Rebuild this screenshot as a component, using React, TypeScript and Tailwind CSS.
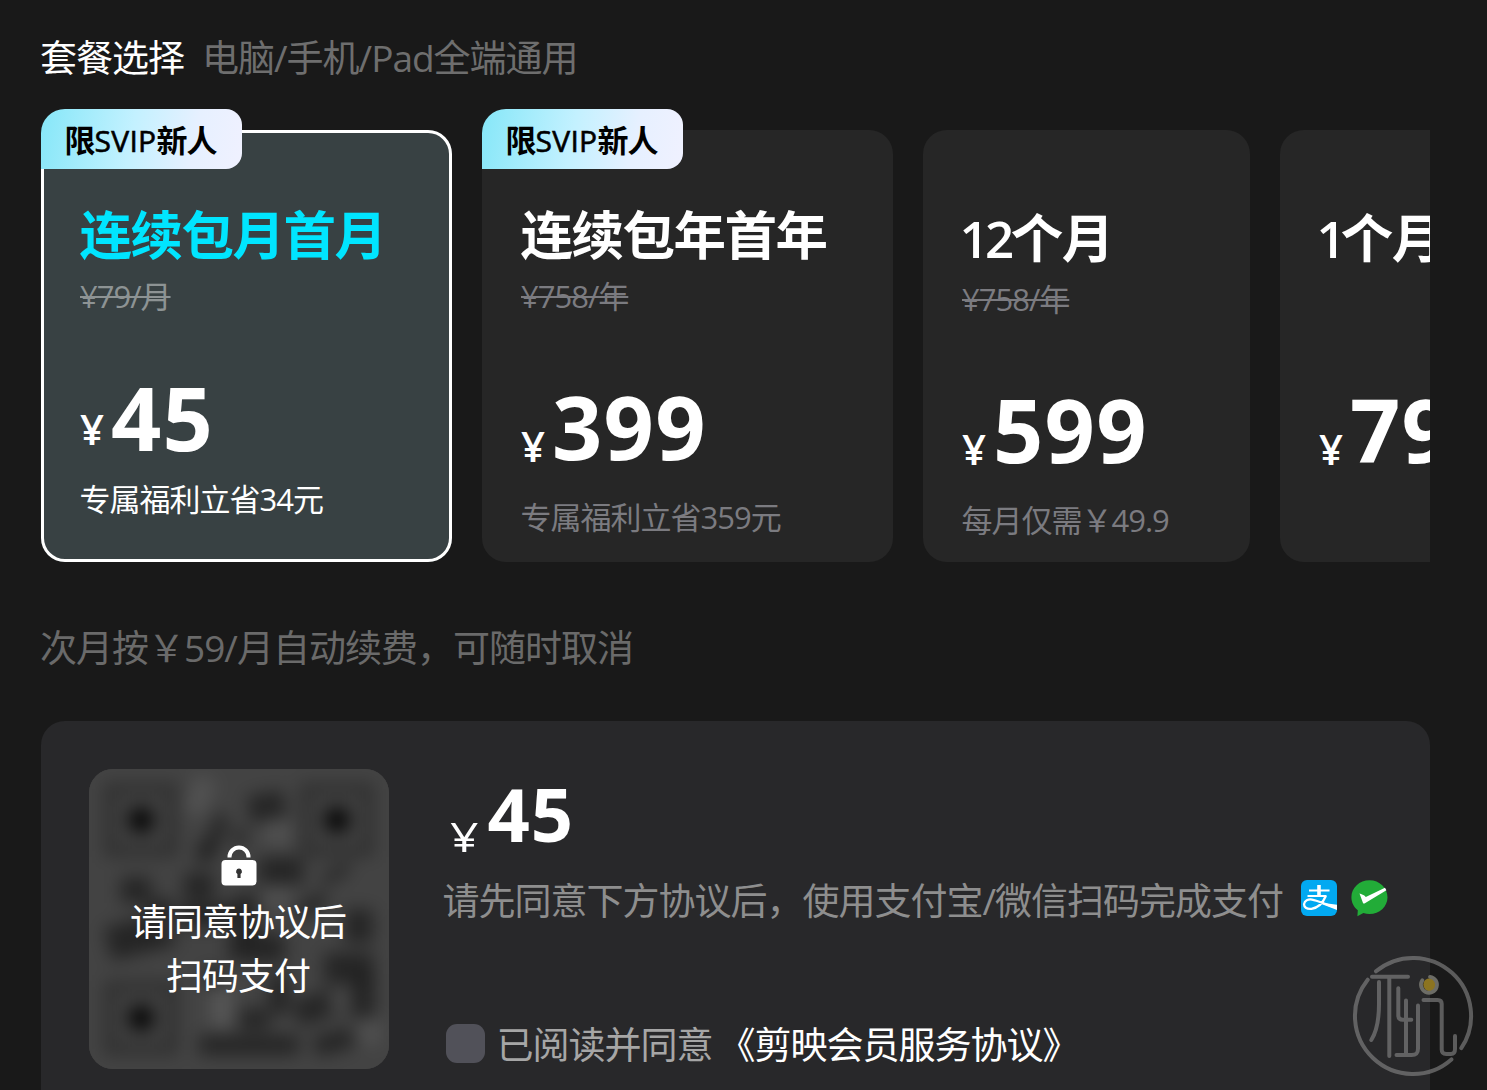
import type { ReactNode } from "react";

const L = ({ children, className = "" }: { children: ReactNode; className?: string }) => (
  <span className={className}>{children}</span>
);

type PlanProps = {
  badge?: boolean;
  selected?: boolean;
  width: string;
  title: ReactNode;
  titleBox: string;
  original?: ReactNode;
  price: string;
  priceBox: string;
  yenBox: string;
  note?: ReactNode;
  noteBox: string;
};

function Plan({ badge, selected, width, title, titleBox, original, price, priceBox, yenBox, note, noteBox }: PlanProps) {
  return (
    <div
      className={`relative flex h-[432px] shrink-0 flex-col rounded-[24px] ${width} ${
        selected ? "bg-[#384143] ring-[3px] ring-inset ring-white" : "bg-[#262626]"
      }`}
    >
      {badge && (
        <div className="absolute left-0 top-[-21px] h-[60px] w-[201px] whitespace-nowrap rounded-[16px] rounded-bl-none rounded-tl-[24px] bg-[linear-gradient(100deg,#86e7f8_0%,#c3f1ff_45%,#e6f0ff_75%,#f0f1ff_100%)] pl-[23.5px] pt-[1px] text-[31px] font-bold leading-[60px] tracking-[-1px] text-black">
          限<L className="text-[30px] font-medium tracking-[0.300px] [-webkit-text-stroke:0.600px_black]">SVIP</L>新人
        </div>
      )}
      <div className={`h-[60px] whitespace-nowrap pl-[38.5px] text-[52.5px] font-bold leading-[60px] tracking-[-1.5px] ${titleBox} ${selected ? "text-[#00e5ff]" : "text-white"}`}>
        {title}
      </div>
      <div className={`mt-[1px] h-[60px] whitespace-nowrap pl-[39px] text-[31px] leading-[60px] tracking-[-1px] ${selected ? "text-[#8d9394]" : "text-[#7b7b80]"}`}>
        {original && <span className="line-through decoration-2">{original}</span>}
      </div>
      <div className={`flex h-[100px] whitespace-nowrap pl-[39px] text-white ${priceBox}`}>
        <span className={`w-[31px] text-[42px] font-semibold leading-[100px] ${yenBox}`}>¥</span>
        <span className="text-[88px] font-bold leading-[100px] tracking-[1.3px]">{price}</span>
      </div>
      <div className={`h-[40px] whitespace-nowrap pl-[38.5px] text-[31px] leading-[40px] tracking-[-1px] ${noteBox} ${selected ? "text-white" : "text-[#7b7b80]"}`}>
        {note}
      </div>
    </div>
  );
}

function LockIcon() {
  return (
    <svg width="36" height="41" viewBox="0 0 36 41" fill="none">
      <path d="M8.500 12.500V12a9.500 9.500 0 0 1 19 0v.5" stroke="#fff" strokeWidth="4" />
      <rect x="0.500" y="15" width="35" height="25.500" rx="4" fill="#fff" />
      <path d="M18 23.500a3 3 0 0 0-1.600 5.500v4h3.200v-4a3 3 0 0 0-1.600-5.500Z" fill="#333" />
    </svg>
  );
}

const blobs: [number, number, number, number, number][] = [
  [120, 45, 14, 40, 20], [108, 72, 16, 22, 10], [160, 24, 36, 28, -10], [145, 60, 12, 16, 0],
  [170, 88, 44, 28, 0], [95, 104, 30, 26, 0], [32, 108, 30, 26, 0], [18, 152, 50, 34, -15],
  [58, 130, 26, 24, 0], [92, 134, 56, 24, 0], [140, 165, 56, 28, 0], [146, 125, 22, 50, 0],
  [205, 130, 34, 14, -35], [256, 140, 28, 34, 0], [235, 184, 50, 30, 0], [60, 160, 26, 18, 0],
  [180, 205, 20, 40, 0], [206, 225, 44, 26, -20], [262, 205, 24, 44, 0], [150, 240, 30, 20, 0],
  [110, 266, 100, 20, 0], [225, 263, 40, 20, -15], [232, 100, 30, 10, -30], [115, 200, 20, 16, 0],
];

function BlurredCode() {
  return (
    <svg className="absolute inset-0" width="300" height="300" viewBox="0 0 300 300">
      <defs>
        <filter id="soft" x="-20%" y="-20%" width="140%" height="140%" colorInterpolationFilters="sRGB">
          <feGaussianBlur stdDeviation="8.500" />
        </filter>
      </defs>
      <rect width="300" height="300" fill="#434343" />
      <g filter="url(#soft)">
        <rect x="-20" y="-20" width="340" height="340" fill="#434343" />
        {[[52, 51], [248, 51], [52, 249]].map(([x, y]) => (
          <g key={`${x}-${y}`}>
            <rect x={x - 31} y={y - 31} width="62" height="62" fill="none" stroke="#303030" strokeWidth="12" />
            <rect x={x - 12} y={y - 12} width="24" height="24" fill="#080808" />
          </g>
        ))}
        {blobs.map(([x, y, w, h, r], i) => (
          <rect key={i} x={x} y={y} width={w} height={h} fill="#1e1e1e" opacity="0.8" transform={`rotate(${r} ${x + w / 2} ${y + h / 2})`} />
        ))}
        <rect x="100" y="8" width="22" height="38" fill="#525252" transform="rotate(20 111 27)" />
        <rect x="176" y="50" width="26" height="26" fill="#505050" />
        <rect x="176" y="116" width="26" height="22" fill="#505050" />
        <rect x="122" y="218" width="22" height="40" fill="#565656" />
        <rect x="240" y="226" width="18" height="14" fill="#4c4c4c" />
        <rect x="270" y="250" width="22" height="26" fill="#505050" />
      </g>
    </svg>
  );
}

function AlipayIcon() {
  return (
    <svg width="36" height="36" viewBox="0 0 36 36" fill="none">
      <rect width="36" height="36" rx="6" fill="#02a9f1" />
      <g stroke="#fff">
        <path d="M8 10.600h20.500M6.500 16h19" strokeWidth="2" />
        <path d="M18 5v11" strokeWidth="3.600" />
        <path d="M24.800 16c-2.300 5.500-7 11.700-14.300 12.800C5.500 29.400 2.800 26.900 3.100 24c.4-3.400 4-5 7.900-4.400C17.500 20.600 24 24.500 36 27.800" strokeWidth="2.300" />
      </g>
      <path d="M21 22.700 36 24.800v5.200L20.500 24Z" fill="#fff" />
    </svg>
  );
}

function WechatPayIcon() {
  return (
    <svg width="37" height="37" viewBox="0 0 37 37" fill="none">
      <path d="M18.500.2C8.500.2.4 7.700.4 17.200c0 5.300 2.500 10 6.400 13L6.400 36.300l6-3.200c2 .6 4 .9 6.100.9 10 0 18-7.400 18-16.800S28.500.2 18.500.2Z" fill="#22ac38" />
      <path d="M8.500 13.600c1.800.4 4.600 1.600 6.300 3.300L34 7.800l1.400 2.400L13.500 23.400c-.7.400-1.200.2-1.500-.5Z" fill="#fff" />
    </svg>
  );
}

function Watermark() {
  return (
    <svg className="absolute left-[1352px] top-[955px]" width="122" height="122" viewBox="0 0 122 122" fill="none">
      <g stroke="#8e8e8e" strokeOpacity="0.580" strokeWidth="4" strokeLinecap="round" strokeLinejoin="round">
        <path d="M24 16.300A58 58 0 0 1 109.250 93.200M99.400 104.400A58 58 0 0 1 15.700 24.700M20 21.800h36M37.300 22v79M27 27v22c0 17-2 27-7.700 36M46.300 33.300v27c0 3 1.500 4.500 4.500 4.500h8.500M54 45.500V100M66 50.500v43c0 5-2 6.500-6.500 6.500H44.500M71.500 45h14.200c2.500 0 4 1.500 4 4v45.500c0 3 1.500 4.500 4.500 4.500h4.800c3 0 4-2 4-5V81" />
      </g>
      <circle cx="77.800" cy="29.700" r="6.500" fill="#8c7420" />
      <path d="M70.400 25.200A8 8 0 1 0 78 21.800" stroke="#6c6c66" strokeWidth="3.800" strokeLinecap="round" />
    </svg>
  );
}

export default function App() {
  return (
    <div className="relative h-[1090px] w-[1487px] overflow-hidden bg-[#191919] font-['Open_Sans','Noto_Sans_CJK_SC',sans-serif]">
      <header className="flex h-[88px] items-center whitespace-nowrap pl-[40px] pt-[27px] text-[37px] leading-[60px] tracking-[-1px]">
        <h1 className="h-[60px] w-[162px] text-white">套餐选择</h1>
        <p className="h-[60px] text-[#6e6e6e]">电脑/手机/Pad全端通用</p>
      </header>

      <section className="ml-[41px] flex h-[474px] w-[1389px] gap-[30px] overflow-hidden pt-[42px]">
        <Plan
          badge
          selected
          width="w-[411px]"
          title="连续包月首月"
          titleBox="mt-[75px]"
          original="¥79/月"
          price="45"
          priceBox="mt-[41px]"
          yenBox="mt-[12px]"
          note="专属福利立省34元"
          noteBox="mt-[12px]"
        />
        <Plan
          badge
          width="w-[411px]"
          title="连续包年首年"
          titleBox="mt-[75px]"
          original="¥758/年"
          price="399"
          priceBox="mt-[50px]"
          yenBox="mt-[20px]"
          note="专属福利立省359元"
          noteBox="mt-[21px]"
        />
        <Plan
          width="w-[327px]"
          title={<><L className="-ml-[2px] text-[51px] font-semibold tracking-[-3.600px]">12</L>个月</>}
          titleBox="mt-[78px]"
          original="¥758/年"
          price="599"
          priceBox="mt-[50px]"
          yenBox="mt-[20px]"
          note="每月仅需￥49.9"
          noteBox="mt-[21px]"
        />
        <Plan
          width="w-[327px]"
          title={<><L className="-ml-[2px] text-[51px] font-semibold tracking-[-5px]">1</L>个月</>}
          titleBox="mt-[78px]"
          price="79"
          priceBox="mt-[50px]"
          yenBox="mt-[20px]"
          noteBox="mt-[21px]"
        />
      </section>

      <p className="mt-[56px] h-[60px] whitespace-nowrap pl-[40px] text-[37px] leading-[60px] tracking-[-1px] text-[#6a6a6a]">
        次月按￥59/月自动续费，可随时取消
      </p>

      <section className="ml-[41px] mt-[43px] flex h-[420px] w-[1389px] rounded-[24px] bg-[#28282a] pl-[48px] pt-[48px]">
        <div className="relative h-[300px] w-[300px] shrink-0 overflow-hidden rounded-[24px]">
          <BlurredCode />
          <div className="relative flex flex-col items-center pt-[76px] text-[37px] leading-[54px] tracking-[-1px] text-white">
            <LockIcon />
            <div className="mt-[9px] h-[54px] pr-[2px]">请同意协议后</div>
            <div className="h-[54px] pr-[2px]">扫码支付</div>
          </div>
        </div>

        <div className="ml-[53.5px] flex flex-col whitespace-nowrap">
          <div className="flex h-[90px] pl-[7px] text-white">
            <span className="mt-[23px] w-[38px] text-[40px] font-medium leading-[90px]"><span className="inline-block origin-left scale-x-[1.25]">¥</span></span>
            <span className="text-[74px] font-bold leading-[90px] tracking-[1px]">45</span>
          </div>
          <div className="mt-[12px] flex h-[60px] items-center text-[37px] leading-[60px] tracking-[-1px] text-[#8e8e8e]">
            <span className="h-[60px] w-[841px]">请先同意下方协议后，使用支付宝/微信扫码完成支付</span>
            <span className="-mt-[6px] ml-[17px]"><AlipayIcon /></span>
            <span className="-mt-[6px] ml-[14.5px]"><WechatPayIcon /></span>
          </div>
          <div className="mt-[83px] flex h-[60px] items-center pl-[3px] text-[37px] leading-[60px] tracking-[-1px]">
            <span className="-mt-[2px] h-[39px] w-[39px] rounded-[11px] bg-[#515159]" />
            <span className="ml-[12px] mt-[1px] h-[60px] text-[#a6a6a6]">已阅读并同意</span>
            <span className="ml-[6px] mt-[1px] h-[60px] text-white">《剪映会员服务协议》</span>
          </div>
        </div>
      </section>

      <Watermark />
    </div>
  );
}
